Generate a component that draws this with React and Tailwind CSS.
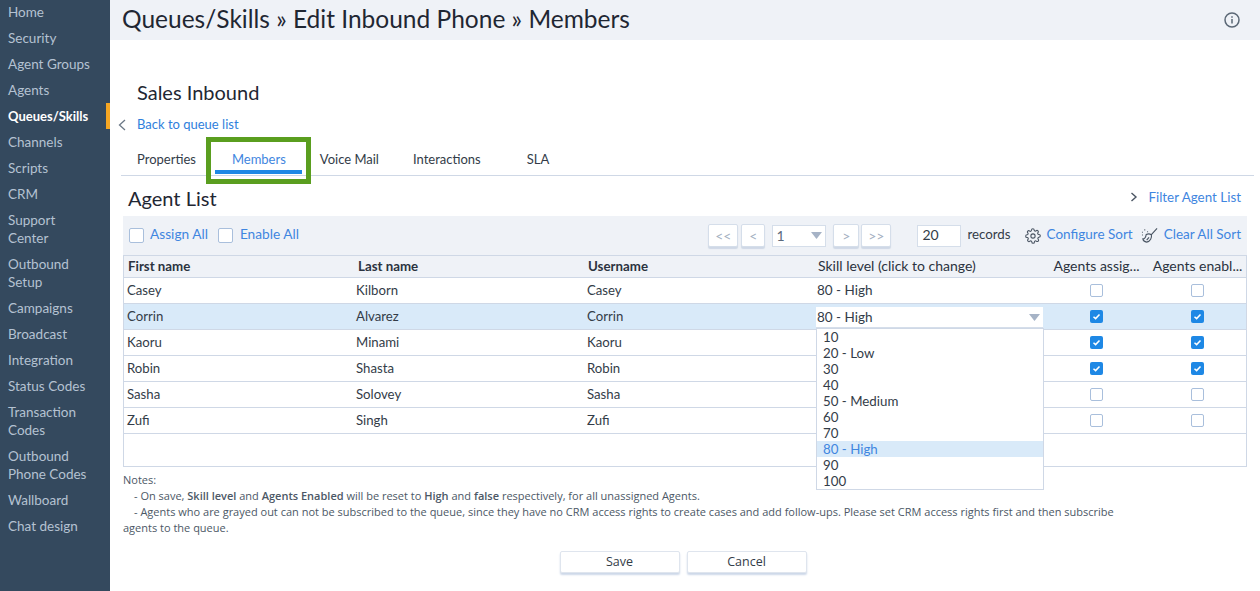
import React from "react";

const nav = [["Home"],["Security"],["Agent Groups"],["Agents"],["Queues/Skills"],["Channels"],["Scripts"],["CRM"],["Support","Center"],["Outbound","Setup"],["Campaigns"],["Broadcast"],["Integration"],["Status Codes"],["Transaction","Codes"],["Outbound","Phone Codes"],["Wallboard"],["Chat design"]];
const rows = [
  ["Casey","Kilborn","Casey",false,false],
  ["Corrin","Alvarez","Corrin",true,true],
  ["Kaoru","Minami","Kaoru",true,true],
  ["Robin","Shasta","Robin",true,true],
  ["Sasha","Solovey","Sasha",false,false],
  ["Zufi","Singh","Zufi",false,false],
];
const skill = ["10","20 - Low","30","40","50 - Medium","60","70","80 - High","90","100"];

function Check({ on, size = "w-[13px] h-[13px]" }) {
  if (on) return (
    <span className="flex w-[13px] h-[13px] rounded-[2px] bg-[#1e88e5] items-center justify-center">
      <svg width="9" height="9" viewBox="0 0 9 9" fill="none"><path d="M1.5 4.7 L3.6 6.6 L7.5 2.4" stroke="#fff" strokeWidth="1.5"/></svg>
    </span>
  );
  return <span className={`block ${size} rounded-[2px] border border-[#a9bfdc] bg-white`} />;
}
function Pg({ children, w }) {
  return <span className={`h-[23px] ${w} flex items-center justify-center bg-white border border-[#d5deea] shadow-[0_2px_1px_#cfd8e6] rounded-[2px] text-[#a3afc2] text-[14px]`}>{children}</span>;
}
function Caret() {
  return <svg width="11" height="7" viewBox="0 0 11 7"><path d="M0 0H11L5.5 7Z" fill="#a6b3c6"/></svg>;
}
const cols = "grid grid-cols-[230px_230px_230px_230px_105px_1fr]";

export default function App() {
  return (
    <div className="w-[1260px] h-[591px] overflow-hidden flex bg-white text-[#333c48] text-[13.2px] font-['Lato','Noto_Sans',sans-serif]">
      <aside className="w-[110px] shrink-0 bg-[#34495e] pt-[1px] -mt-[2px] h-[593px] flex flex-col text-[#b4c2d2] text-[13.5px] leading-[18px]">
        {nav.map((n) => {
          const active = n[0] === "Queues/Skills";
          return (
            <div key={n[0]} className={`pl-2 py-1 ${active ? "text-white font-bold text-[13px] border-r-[4px] border-[#f5a623]" : ""}`}>
              {n.map((l) => <div key={l}>{l}</div>)}
            </div>
          );
        })}
      </aside>
      <main className="flex-1 min-w-0 relative">
        <header className="h-10 bg-[#eff2f7] flex items-center justify-between pl-[12px] pr-[20px]">
          <h1 className="text-[24.5px] text-[#1f2733] pb-[2px]">Queues/Skills » Edit Inbound Phone » Members</h1>
          <svg width="16" height="16" viewBox="0 0 16 16" fill="none" stroke="#5b6876" strokeWidth="1.5"><circle cx="8" cy="8" r="7"/><path d="M8 7v4.5M8 4.2v1.6"/></svg>
        </header>

        <div className="pl-[27px] pt-[39px] text-[20px] leading-[26px] text-[#1f2733]">Sales Inbound</div>
        <div className="flex items-center pl-[8px] mt-[10px] h-[20px]">
          <svg width="8" height="12" viewBox="0 0 8 12" fill="none" stroke="#6b7886" strokeWidth="1.3"><path d="M7 1L1.5 6L7 11"/></svg>
          <span className="ml-[11px] text-[#2f80dc] text-[13px]">Back to queue list</span>
        </div>

        <nav className="relative mt-[15px] ml-[11px] mr-[6px] h-[26px] border-b border-[#cfd8e6] flex items-start text-[13px] leading-[18px] pl-[16px]">
          <span>Properties</span>
          <span className="ml-[36px] text-[#3f86e0] relative">Members
            <span className="absolute -left-[17px] -right-[16px] top-[20px] h-[4px] bg-[#1e88e5]" />
          </span>
          <span className="ml-[34px]">Voice Mail</span>
          <span className="ml-[34px]">Interactions</span>
          <span className="ml-[46px]">SLA</span>
        </nav>
        <div className="absolute left-[96px] top-[137px] w-[105px] h-[47px] border-[5px] border-[#5a9e1f]" />

        <div className="ml-[18px] mr-[18px] mt-[6px] mb-[2px] h-[32px] flex items-center justify-between pr-[1px]">
          <span className="text-[20px] text-[#1f2733]">Agent List</span>
          <span className="flex items-center text-[#3f86e0] text-[13.4px] pb-[2px]">
            <svg width="8" height="10" viewBox="0 0 8 10" fill="none" stroke="#4a5563" strokeWidth="1.4" className="mr-[10px]"><path d="M1.5 1L6 5L1.5 9"/></svg>
            Filter Agent List
          </span>
        </div>

        <div className="ml-[13px] mr-[13px] h-[39px] bg-[#eff2f7] flex items-center pl-[6px] pr-[6px]">
          <Check size="w-[15px] h-[15px]" />
          <span className="ml-[6px] text-[#3f86e0] text-[13.7px] pb-[3px]">Assign All</span>
          <span className="ml-[10px]"><Check size="w-[15px] h-[15px]" /></span>
          <span className="ml-[7px] text-[#3f86e0] text-[13.7px] pb-[3px]">Enable All</span>
          <div className="ml-auto flex items-center">
            <Pg w="w-[30px]">{"<<"}</Pg>
            <span className="ml-[3px]"><Pg w="w-[24px]">{"<"}</Pg></span>
            <span className="ml-[7px] w-[54px] h-[22px] bg-white border border-[#d5deea] flex items-center justify-between px-[3px] text-[14px] text-[#5c6a7c]">1<Caret /></span>
            <span className="ml-[7px]"><Pg w="w-[26px]">{">"}</Pg></span>
            <span className="ml-[2px]"><Pg w="w-[30px]">{">>"}</Pg></span>
            <span className="ml-[26px] w-[44px] h-[22px] bg-white border border-[#d5deea] pl-[4px] leading-[18px] text-[14px] text-[#333c48]">20</span>
            <span className="ml-[6px] text-[13.3px] pb-[2px]">records</span>
            <svg className="ml-[14px]" width="16" height="16" viewBox="0 0 24 24" fill="none" stroke="#4a5563" strokeWidth="1.6"><circle cx="12" cy="12" r="3.2"/><path d="M19.4 15a1.65 1.65 0 0 0 .33 1.82l.06.06a2 2 0 1 1-2.83 2.83l-.06-.06a1.65 1.65 0 0 0-2.7 1.15V21a2 2 0 1 1-4 0v-.09a1.65 1.65 0 0 0-2.8-1.12l-.06.06a2 2 0 1 1-2.83-2.83l.06-.06a1.65 1.65 0 0 0-1.15-2.7H3a2 2 0 1 1 0-4h.09a1.65 1.65 0 0 0 1.12-2.8l-.06-.06a2 2 0 1 1 2.83-2.83l.06.06a1.65 1.65 0 0 0 2.7-1.15V3a2 2 0 1 1 4 0v.09a1.65 1.65 0 0 0 2.8 1.12l.06-.06a2 2 0 1 1 2.83 2.83l-.06.06a1.65 1.65 0 0 0 1.15 2.7H21a2 2 0 1 1 0 4h-.09a1.65 1.65 0 0 0-1.51 1.26z"/></svg>
            <span className="ml-[6px] text-[#3f86e0] text-[13.5px] pb-[3px]">Configure Sort</span>
            <svg className="ml-[8px]" width="17" height="17" viewBox="0 0 18 18" fill="none" stroke="#4a5563" strokeWidth="1.2"><path d="M17 1.5L10.5 8.5M5.5 8c1.7-.8 4-.8 5.5.3.6 2.8-1 7-5 7.7-2.2-.3-3.8-2-4-3.4 1.5 0 3-1.7 3.5-4.6zM1 5.5h1M3.5 3h1M6.5 5h1M1 8.5h1M6 14l2.5-3"/></svg>
            <span className="ml-[6px] text-[#3f86e0] text-[13.5px] pb-[3px]">Clear All Sort</span>
          </div>
        </div>

        <div className="relative ml-[13px] mr-[13px] h-[212px] border border-[#cfd8e6]">
          <div className={`${cols} h-[22px] bg-[#eff2f7] border-b border-[#cfd8e6] font-bold text-[#2b3340] text-[13.3px] leading-[16px] items-center`}>
            <span className="pl-[4px] pb-[2px]">First name</span>
            <span className="pl-[4px] pb-[2px]">Last name</span>
            <span className="pl-[4px] pb-[2px]">Username</span>
            <span className="pl-[4px] pb-[2px] font-normal text-[14px] whitespace-nowrap">Skill level (click to change)</span>
            <span className="text-center pb-[2px] font-normal text-[14px] whitespace-nowrap">Agents assig...</span>
            <span className="text-center pb-[2px] font-normal text-[14px] whitespace-nowrap">Agents enabl...</span>
          </div>
          {rows.map((r, i) => (
            <div key={r[0]} className={`${cols} h-[26px] border-b border-[#cfd8e6] items-center ${i === 1 ? "bg-[#d9eaf9]" : ""}`}>
              <span className="pl-[3px] pt-[1px]">{r[0]}</span>
              <span className="pl-[2px] pt-[1px]">{r[1]}</span>
              <span className="pl-[3px] pt-[1px]">{r[2]}</span>
              <span className={`pl-[2px] text-[13.5px] ${i === 1 ? "self-end" : ""}`}>
                {i === 0 && <span className="pl-[1px]">80 - High</span>}
                {i === 1 && (
                  <span className="flex items-center justify-between w-[227px] h-[22px] bg-white border-b-2 border-[#d5deea] pl-[1px] pr-[3px]">80 - High<Caret /></span>
                )}
              </span>
              <span className="flex justify-center"><Check on={r[3]} /></span>
              <span className="flex justify-center"><Check on={r[4]} /></span>
            </div>
          ))}
          <div className="absolute left-[692px] top-[72px] w-[228px] bg-white border border-[#cfd8e6] z-10">
            {skill.map((s) => (
              <div key={s} className={`h-[16px] leading-[16px] pl-[6px] text-[13.3px] ${s === "80 - High" ? "bg-[#d9eaf9] text-[#3f86e0]" : ""}`}>{s}</div>
            ))}
          </div>
        </div>

        <div className="ml-[13px] mt-[5px] w-[1000px] text-[11px] leading-[16px] text-[#4c5866] font-['Open_Sans',sans-serif]">
          <div>Notes:</div>
          <div className="pl-[11px]">- On save, <b className="font-semibold">Skill level</b> and <b className="font-semibold">Agents Enabled</b> will be reset to <b className="font-semibold">High</b> and <b className="font-semibold">false</b> respectively, for all unassigned Agents.</div>
          <div className="indent-[11px]">- Agents who are grayed out can not be subscribed to the queue, since they have no CRM access rights to create cases and add follow-ups. Please set CRM access rights first and then subscribe agents to the queue.</div>
        </div>

        <div className="flex justify-center gap-[7px] mt-[15px] pr-[4px]">
          {["Save","Cancel"].map((b) => (
            <span key={b} className="w-[120px] h-[22px] flex items-center justify-center bg-white border border-[#dfe5ee] shadow-[0_2px_2px_#ccd7e8] rounded-[2px] font-['Open_Sans',sans-serif] text-[12.5px] text-[#333c48]">{b}</span>
          ))}
        </div>
      </main>
    </div>
  );
}
